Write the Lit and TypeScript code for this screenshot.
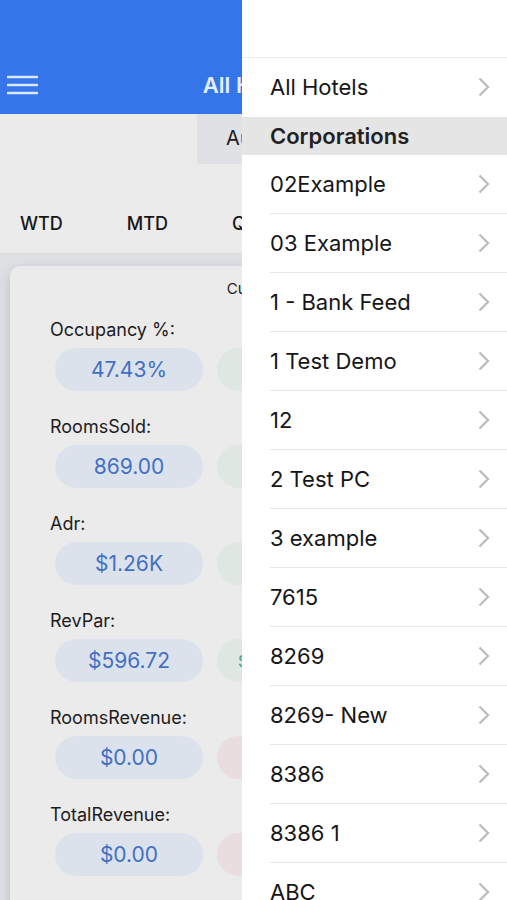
import { LitElement, html, css, nothing } from "lit";
import { customElement, property } from "lit/decorators.js";

const chevron = html`<svg class="chevron" viewBox="0 0 12 20" aria-hidden="true">
  <path d="M1.5 1.5 L10 10 L1.5 18.5" fill="none" stroke="#bdbdbf" stroke-width="2.3" />
</svg>`;

interface Metric {
  label: string;
  current: string;
  previous?: string;
  tone: "up" | "down";
}

const metrics: Metric[] = [
  { label: "Occupancy %:", current: "47.43%", tone: "up" },
  { label: "RoomsSold:", current: "869.00", tone: "up" },
  { label: "Adr:", current: "$1.26K", tone: "up" },
  { label: "RevPar:", current: "$596.72", previous: "$", tone: "up" },
  { label: "RoomsRevenue:", current: "$0.00", tone: "down" },
  { label: "TotalRevenue:", current: "$0.00", tone: "down" },
];

const corporations = [
  "02Example",
  "03 Example",
  "1 - Bank Feed",
  "1 Test Demo",
  "12",
  "2 Test PC",
  "3 example",
  "7615",
  "8269",
  "8269- New",
  "8386",
  "8386 1",
  "ABC",
];

@customElement("metric-row")
class MetricRow extends LitElement {
  @property({ attribute: false }) metric!: Metric;

  static styles = css`
    :host {
      display: block;
    }
    .label {
      margin: 0 0 6px;
      font-size: 18px;
      line-height: 24px;
      font-weight: 400;
      color: #1c1c1e;
    }
    .pills {
      display: grid;
      grid-template-columns: 148px 1fr 1fr;
      gap: 14px;
      padding-left: 5px;
    }
    .pill {
      box-sizing: border-box;
      height: 43px;
      border-radius: 22px;
      display: flex;
      align-items: center;
      padding-left: 21px;
      font-size: 16px;
    }
    .current {
      justify-content: center;
      padding: 0;
      background: #dce2ec;
      color: #4270c4;
      font-size: 21px;
    }
    .up {
      background: #dee7e2;
      color: #3d9b74;
    }
    .down {
      background: #eadde0;
      color: #c2525f;
    }
  `;

  render() {
    const m = this.metric;
    return html`
      <h3 class="label">${m.label}</h3>
      <div class="pills">
        <span class="pill current">${m.current}</span>
        <span class="pill ${m.tone}">${m.previous ?? nothing}</span>
        <span class="pill ${m.tone}"></span>
      </div>
    `;
  }
}

@customElement("hotel-drawer")
class HotelDrawer extends LitElement {
  static styles = css`
    :host {
      display: block;
      background: #fff;
      overflow: hidden;
    }
    .top {
      height: 57px;
      border-bottom: 1px solid #ededee;
    }
    .list {
      list-style: none;
      margin: 0;
      padding: 0;
    }
    .heading {
      margin: 0;
      padding: 0 28px;
      background: #e5e5e5;
      color: #222224;
      font-size: 22px;
      font-weight: 600;
      line-height: 38px;
    }
    .entry {
      padding-left: 28px;
    }
    .item {
      display: flex;
      align-items: center;
      justify-content: space-between;
      box-sizing: border-box;
      width: 100%;
      height: 59px;
      padding: 0 17px 0 0;
      border: 0;
      border-bottom: 1px solid #e6e6e7;
      background: none;
      font: inherit;
      font-size: 22px;
      color: #161618;
      text-align: left;
    }
    .plain {
      border-bottom-color: transparent;
    }
    .chevron {
      width: 12px;
      height: 20px;
    }
  `;

  render() {
    return html`
      <div class="top"></div>
      <div class="entry"><button class="item plain">All Hotels${chevron}</button></div>
      <h2 class="heading">Corporations</h2>
      <ul class="list">
        ${corporations.map(
          (name) => html`<li class="entry"><button class="item">${name}${chevron}</button></li>`
        )}
      </ul>
    `;
  }
}

@customElement("app-root")
class AppRoot extends LitElement {
  static styles = css`
    :host {
      display: block;
      position: relative;
      height: 100vh;
      overflow: hidden;
      background: #dfe1e5;
      font-family: Inter, "Noto Sans", sans-serif;
      color: #1c1c1e;
    }
    .bar {
      display: grid;
      grid-template-columns: 1fr auto 1fr;
      align-items: center;
      height: 58px;
      padding: 56px 7px 0;
      background: #3476ea;
      color: #e4edfc;
    }
    .menu {
      justify-self: start;
      display: flex;
      padding: 0;
      border: 0;
      background: none;
    }
    .burger {
      width: 31px;
      height: 20px;
    }
    .title {
      margin: 0;
      font-size: 22px;
      line-height: 28px;
      font-weight: 600;
    }
    .filters {
      background: #ebebeb;
      border-bottom: 1px solid #d9dadc;
    }
    .period {
      display: block;
      width: 113px;
      height: 50px;
      margin: 0 auto;
      padding: 0 0 2px;
      border: 0;
      background: #e0e1e5;
      font: inherit;
      font-size: 20px;
      color: #1c1c1e;
    }
    .tabs {
      display: flex;
      gap: 64px;
      padding: 45px 20px 14px;
    }
    .tab {
      padding: 0;
      border: 0;
      background: none;
      font: inherit;
      font-size: 18px;
      font-weight: 500;
      line-height: 30px;
      color: #161618;
    }
    .card {
      margin: 12px 10px 0;
      padding: 11px 40px 48px;
      border-radius: 10px;
      background: #ebebeb;
      box-shadow: 0 4px 14px rgba(90, 100, 120, 0.28);
    }
    .card-title {
      margin: 0 0 17px;
      font-size: 15px;
      line-height: 24px;
      font-weight: 400;
      text-align: center;
    }
    .metrics {
      display: grid;
      gap: 24px;
    }
    .drawer {
      position: absolute;
      top: 0;
      right: 0;
      bottom: 0;
      width: 265px;
    }
  `;

  render() {
    return html`
      <header class="bar">
        <button class="menu" aria-label="Menu">
          <svg class="burger" viewBox="0 0 31 20" aria-hidden="true">
            <path d="M1 2H30M1 10H30M1 18H30" stroke="#dbe8fd" stroke-width="2.6" stroke-linecap="round" />
          </svg>
        </button>
        <h1 class="title">All Hotels</h1>
      </header>
      <section class="filters">
        <button class="period">Aug 7</button>
        <nav class="tabs">
          ${["WTD", "MTD", "QTD"].map((t) => html`<button class="tab">${t}</button>`)}
        </nav>
      </section>
      <main class="card">
        <h2 class="card-title">Current</h2>
        <div class="metrics">
          ${metrics.map((m) => html`<metric-row .metric=${m}></metric-row>`)}
        </div>
      </main>
      <hotel-drawer class="drawer"></hotel-drawer>
    `;
  }
}
